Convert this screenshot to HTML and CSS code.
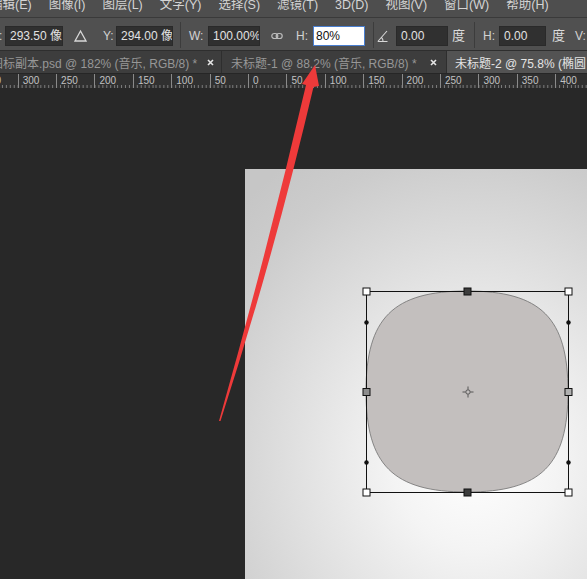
FILE: index.html
```html
<!DOCTYPE html>
<html lang="zh-CN">
<head>
    <meta charset="UTF-8">
    <title>Photoshop - 变换椭圆</title>
    <link rel="stylesheet" href="styles.css">
</head>
<body>
<div class="app">
    <div class="menubar">
        <span class="menu-item first">编辑(E)</span>
        <span class="menu-item">图像(I)</span>
        <span class="menu-item">图层(L)</span>
        <span class="menu-item">文字(Y)</span>
        <span class="menu-item">选择(S)</span>
        <span class="menu-item">滤镜(T)</span>
        <span class="menu-item">3D(D)</span>
        <span class="menu-item">视图(V)</span>
        <span class="menu-item">窗口(W)</span>
        <span class="menu-item">帮助(H)</span>
    </div>

    <div class="options">
        <span class="lbl lbl-x">X:</span>
        <span class="field f1">293.50 像素</span>
        <svg class="ico ico-tri" width="13" height="20" viewBox="0 0 13 20">
            <polygon points="6.5,5 12,15 1,15" fill="none" stroke="#d8d8d8" stroke-width="1.3"/>
        </svg>
        <span class="lbl lbl-y">Y:</span>
        <span class="field f2">294.00 像素</span>
        <span class="sep s1"></span>
        <span class="lbl lbl-w">W:</span>
        <span class="field f3">100.00%</span>
        <svg class="ico ico-link" width="12" height="20" viewBox="0 0 12 20">
            <rect x="0.8" y="7.5" width="6" height="5" rx="2.5" fill="none" stroke="#bdbdbd" stroke-width="1.2"/>
            <rect x="5.2" y="7.5" width="6" height="5" rx="2.5" fill="none" stroke="#bdbdbd" stroke-width="1.2"/>
        </svg>
        <span class="lbl lbl-h">H:</span>
        <span class="field field-on f4">80%</span>
        <span class="sep s2"></span>
        <svg class="ico ico-angle" width="11" height="20" viewBox="0 0 11 20">
            <path d="M0.8 15.5 L10 5 M0.8 15.5 H10.5 M4.5 11.5 A5 5 0 0 1 6 15.5" fill="none" stroke="#d8d8d8" stroke-width="1.1"/>
        </svg>
        <span class="field f5">0.00</span>
        <span class="unit u1">度</span>
        <span class="sep s3"></span>
        <span class="lbl lbl-h2">H:</span>
        <span class="field f6">0.00</span>
        <span class="unit u2">度</span>
        <span class="lbl lbl-v">V:</span>
    </div>

    <div class="tabs">
        <div class="tab tab-1">
            <span class="tab-title">图标副本.psd @ 182% (音乐, RGB/8) *</span>
            <svg class="tab-close" width="7" height="7" viewBox="0 0 7 7">
                <path d="M1 1 L6 6 M6 1 L1 6" stroke="#e6e6e6" stroke-width="1.6"/>
            </svg>
        </div>
        <div class="tab tab-2">
            <span class="tab-title">未标题-1 @ 88.2% (音乐, RGB/8) *</span>
            <svg class="tab-close" width="7" height="7" viewBox="0 0 7 7">
                <path d="M1 1 L6 6 M6 1 L1 6" stroke="#e6e6e6" stroke-width="1.6"/>
            </svg>
        </div>
        <div class="tab tab-active">
            <span class="tab-title">未标题-2 @ 75.8% (椭圆 1, RGB/8) *</span>
        </div>
    </div>

    <div class="ruler">
        <div class="ruler-row">
            <span class="tick">350</span>
            <span class="tick">300</span>
            <span class="tick">250</span>
            <span class="tick">200</span>
            <span class="tick">150</span>
            <span class="tick">100</span>
            <span class="tick">50</span>
            <span class="tick">0</span>
            <span class="tick">50</span>
            <span class="tick">100</span>
            <span class="tick">150</span>
            <span class="tick">200</span>
            <span class="tick">250</span>
            <span class="tick">300</span>
            <span class="tick">350</span>
            <span class="tick">400</span>
            <span class="tick">450</span>
        </div>
    </div>

    <div class="workspace">
        <div class="canvas">
            <svg class="shape" width="214" height="213" viewBox="-6 -6 214 213">
                <path d="M101 0 C175 0 202 27 202 100.5 C202 174 175 201 101 201 C27 201 0 174 0 100.5 C0 27 27 0 101 0 Z"
                      fill="#c3bfbe" stroke="#707070" stroke-width="0.8"/>
                <rect x="0.5" y="0.5" width="202" height="201" fill="none" stroke="#111" stroke-width="1"/>
                <g fill="#111">
                    <circle cx="0.5" cy="31.5" r="2.2"/>
                    <circle cx="0.5" cy="171.5" r="2.2"/>
                    <circle cx="202.5" cy="31.5" r="2.2"/>
                    <circle cx="202.5" cy="171.5" r="2.2"/>
                </g>
                <g stroke="#111" stroke-width="1">
                    <rect x="-3" y="-3" width="7" height="7" fill="#fff"/>
                    <rect x="199" y="-3" width="7" height="7" fill="#fff"/>
                    <rect x="-3" y="198" width="7" height="7" fill="#fff"/>
                    <rect x="199" y="198" width="7" height="7" fill="#fff"/>
                    <rect x="98" y="-3" width="7" height="7" fill="#3c3c3c"/>
                    <rect x="98" y="198" width="7" height="7" fill="#3c3c3c"/>
                    <rect x="-3" y="97.5" width="7" height="7" fill="#8c8c8c"/>
                    <rect x="199" y="97.5" width="7" height="7" fill="#b0b0b0"/>
                </g>
                <g stroke="#4a4a4a" stroke-width="0.9" fill="none">
                    <circle cx="102" cy="101" r="2.2"/>
                    <path d="M102 95.5 V98.5 M102 103.5 V106.5 M96.5 101 H99.5 M104.5 101 H107.5"/>
                </g>
            </svg>
        </div>
    </div>

    <svg class="arrow" width="587" height="579" viewBox="0 0 587 579">
        <path d="M219 421 Q266.5 254 306 85 L302 84 L315 65 L319 86 L313.5 87 Q274 256 220.5 421 Z" fill="#ee3a3a"/>
    </svg>
</div>
</body>
</html>
```

FILE: styles.css
```css
body, html {
    margin: 0;
    padding: 0;
    width: 100%;
    height: 100%;
    overflow: hidden;
    background: #282828;
}
.app {
    position: relative;
    width: 587px;
    height: 579px;
    display: flex;
    flex-direction: column;
    overflow: hidden;
    font-family: "Liberation Sans", "Noto Sans CJK SC", sans-serif;
}

/* menu */
.menubar {
    height: 17px;
    flex-shrink: 0;
    display: flex;
    gap: 17px;
    overflow: hidden;
    background: #4e4e4e;
    color: #d4d4d4;
    font-size: 12.5px;
    line-height: 13px;
    white-space: nowrap;
}
.menu-item {
    margin-top: -1px;
}
.menu-item.first {
    margin-left: -10px;
}

/* options bar */
.options {
    height: 33px;
    flex-shrink: 0;
    box-sizing: border-box;
    padding-top: 8px;
    display: flex;
    align-items: flex-start;
    overflow: hidden;
    background: #505050;
    border-top: 1px solid #3a3a3a;
    color: #d2d2d2;
    font-size: 12px;
    white-space: nowrap;
}
.lbl, .unit, .field, .ico, .sep {
    flex-shrink: 0;
}
.lbl {
    line-height: 20px;
}
.unit {
    font-size: 13px;
    line-height: 20px;
    width: 13px;
    color: #dcdcdc;
}
.field {
    height: 20px;
    box-sizing: border-box;
    padding: 0 4px;
    line-height: 18px;
    overflow: hidden;
    background: #303030;
    border: 1px solid #2a2a2a;
    color: #e2e2e2;
}
.field-on {
    background: #fff;
    border-color: #4a7fd0;
    color: #111;
    padding-left: 2px;
}
.sep {
    width: 1px;
    height: 26px;
    margin-top: -4px;
    background: #3c3c3c;
}
.lbl-x { margin-left: -9px; width: 11px; }
.f1 { margin-left: 3px; width: 58px; }
.ico-tri { margin-left: 11px; }
.lbl-y { margin-left: 16px; width: 8px; }
.f2 { margin-left: 5px; width: 57px; }
.s1 { margin-left: 7px; }
.lbl-w { margin-left: 8px; width: 12px; }
.f3 { margin-left: 7px; width: 52px; }
.ico-link { margin-left: 11px; }
.lbl-h { margin-left: 13px; width: 9px; }
.f4 { margin-left: 8px; width: 52px; }
.s2 { margin-left: 8px; }
.ico-angle { margin-left: 3px; }
.f5 { margin-left: 8px; width: 52px; }
.u1 { margin-left: 4px; }
.s3 { margin-left: 9px; }
.lbl-h2 { margin-left: 8px; width: 10px; }
.f6 { margin-left: 6px; width: 47px; }
.u2 { margin-left: 6px; }
.lbl-v { margin-left: 10px; width: 12px; }

/* document tabs */
.tabs {
    height: 22px;
    flex-shrink: 0;
    display: flex;
    overflow: hidden;
    background: #3d3d3d;
    border-top: 1px solid #2e2e2e;
    font-size: 12px;
    white-space: nowrap;
}
.tab {
    flex-shrink: 0;
    box-sizing: border-box;
    display: flex;
    align-items: center;
    justify-content: space-between;
    color: #979797;
    border-right: 1px solid #2e2e2e;
}
.tab-1 {
    width: 231px;
    margin-left: -9px;
    padding-right: 7px;
}
.tab-2 {
    width: 225px;
    padding-left: 9px;
    padding-right: 9px;
}
.tab-active {
    flex: 1;
    padding-left: 8px;
    background: #535353;
    color: #e4e4e4;
    border-right: none;
}

/* ruler */
.ruler {
    height: 15px;
    flex-shrink: 0;
    overflow: hidden;
    background-color: #303030;
    background-image: repeating-linear-gradient(to right, #7c7c7c 0 1px, transparent 1px 3.84px);
    background-size: 38.4px 3px;
    background-position: 17.7px bottom;
    background-repeat: repeat-x;
    border-top: 1px solid #262626;
    box-sizing: border-box;
}
.ruler-row {
    display: flex;
    margin-left: -20.7px;
}
.tick {
    flex-shrink: 0;
    width: 38.4px;
    height: 15px;
    box-sizing: border-box;
    padding-left: 4px;
    padding-top: 1px;
    border-left: 1px solid #8a8a8a;
    color: #c2c2c2;
    font-size: 10px;
    line-height: 11px;
}

/* work area */
.workspace {
    flex: 1;
    display: flex;
    align-items: flex-start;
    background: #282828;
}
.canvas {
    position: relative;
    margin-left: 245px;
    margin-top: 81px;
    flex: 1;
    align-self: stretch;
    background: radial-gradient(ellipse 330px 360px at 230px 290px, #ffffff 0%, #f4f4f4 25%, #e0e0e0 55%, #cccccc 85%, #c6c6c6 100%);
}
.shape {
    position: absolute;
    left: 115px;
    top: 116px;
}

/* annotation */
.arrow {
    position: absolute;
    left: 0;
    top: 0;
    pointer-events: none;
}
```
